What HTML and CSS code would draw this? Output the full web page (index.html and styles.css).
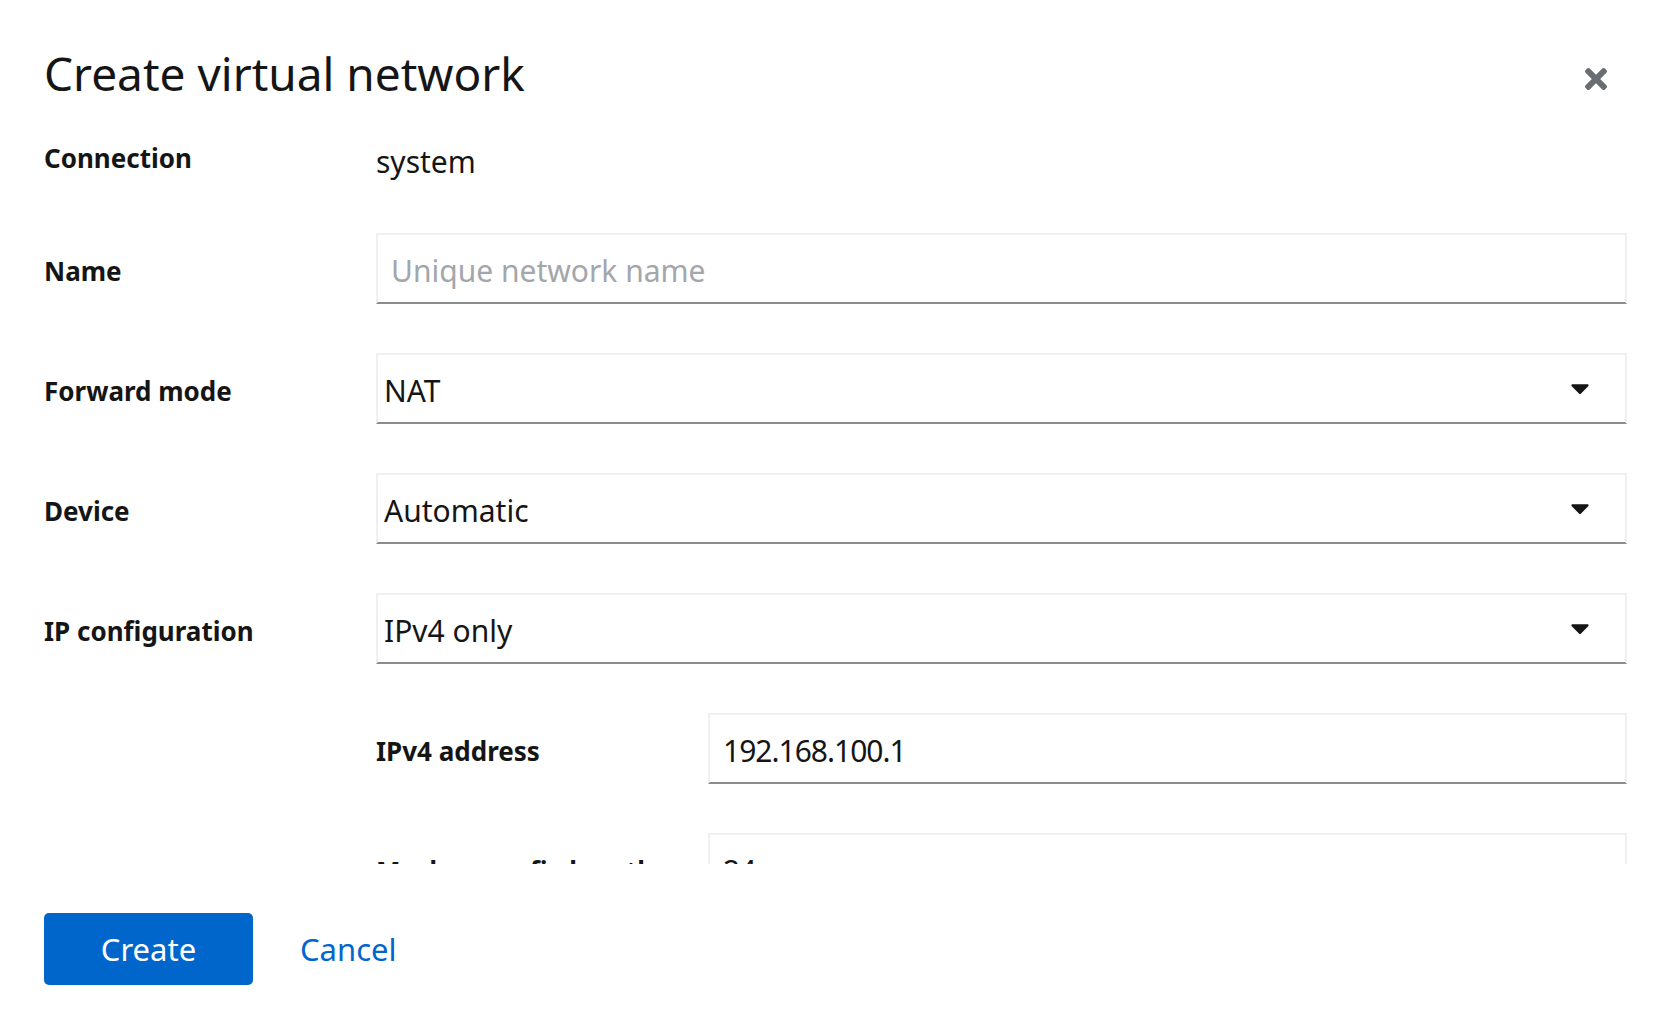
FILE: index.html
```html
<!DOCTYPE html>
<html lang="en">
<head>
<meta charset="utf-8">
<title>Create virtual network</title>
<link rel="stylesheet" href="styles.css">
</head>
<body>
<div class="modal" role="dialog" aria-labelledby="modal-title">
  <header class="modal-header">
    <h1 class="modal-title" id="modal-title">Create virtual network</h1>
    <button class="close-btn" aria-label="Close">
      <svg viewBox="0 80 352 352" width="22" height="22" aria-hidden="true"><path fill="currentColor" d="M242.72 256l100.07-100.07c12.28-12.28 12.28-32.19 0-44.48l-22.24-22.24c-12.28-12.28-32.19-12.28-44.48 0L176 189.28 75.93 89.21c-12.28-12.28-32.19-12.28-44.48 0L9.21 111.45c-12.28 12.28-12.28 32.19 0 44.48L109.28 256 9.21 356.07c-12.28 12.28-12.28 32.19 0 44.48l22.24 22.24c12.28 12.28 32.2 12.28 44.48 0L176 322.72l100.07 100.07c12.28 12.28 32.2 12.28 44.48 0l22.24-22.24c12.28-12.28 12.28-32.19 0-44.48L242.72 256z"/></svg>
    </button>
  </header>

  <div class="modal-body">
    <form class="form">
      <div class="form-row text-row">
        <label class="form-label">Connection</label>
        <div class="form-value">system</div>
      </div>

      <div class="form-row">
        <label class="form-label" for="name">Name</label>
        <div class="text-input"><span class="placeholder">Unique network name</span></div>
      </div>

      <div class="form-row">
        <label class="form-label">Forward mode</label>
        <div class="select"><span class="select-text">NAT</span><svg class="caret" viewBox="4 190 312 168" width="18" height="10" aria-hidden="true"><path fill="currentColor" d="M31.3 192h257.3c17.8 0 26.7 21.5 14.1 34.1L174.1 354.8c-7.8 7.8-20.5 7.8-28.3 0L17.2 226.1C4.6 213.5 13.5 192 31.3 192z"/></svg></div>
      </div>

      <div class="form-row">
        <label class="form-label">Device</label>
        <div class="select"><span class="select-text">Automatic</span><svg class="caret" viewBox="4 190 312 168" width="18" height="10" aria-hidden="true"><path fill="currentColor" d="M31.3 192h257.3c17.8 0 26.7 21.5 14.1 34.1L174.1 354.8c-7.8 7.8-20.5 7.8-28.3 0L17.2 226.1C4.6 213.5 13.5 192 31.3 192z"/></svg></div>
      </div>

      <div class="form-row">
        <label class="form-label">IP configuration</label>
        <div class="select"><span class="select-text">IPv4 only</span><svg class="caret" viewBox="4 190 312 168" width="18" height="10" aria-hidden="true"><path fill="currentColor" d="M31.3 192h257.3c17.8 0 26.7 21.5 14.1 34.1L174.1 354.8c-7.8 7.8-20.5 7.8-28.3 0L17.2 226.1C4.6 213.5 13.5 192 31.3 192z"/></svg></div>
      </div>

      <div class="form-row">
        <div class="spacer"></div>
        <div class="nested">
          <div class="form-row">
            <label class="form-label">IPv4 address</label>
            <div class="text-input"><span class="value">192.168.100.1</span></div>
          </div>
          <div class="form-row">
            <label class="form-label">Mask or prefix length</label>
            <div class="text-input"><span class="value">24</span></div>
          </div>
          <div class="form-row">
            <label class="form-label">DHCP range</label>
            <div class="text-input"><span class="value"></span></div>
          </div>
        </div>
      </div>
    </form>
  </div>

  <footer class="modal-footer">
    <button class="btn btn-primary">Create</button>
    <button class="btn btn-link">Cancel</button>
  </footer>
</div>
</body>
</html>
```

FILE: styles.css
```css
html, body {
  margin: 0;
  padding: 0;
  background: #ffffff;
}

body {
  font-family: "Noto Sans", "Open Sans", sans-serif;
  color: #151515;
}

.modal {
  width: 1662px;
  height: 1026px;
  box-sizing: border-box;
  padding: 43px 35px 0 44px;
  display: flex;
  flex-direction: column;
  background: #ffffff;
}

.modal-header {
  display: flex;
  align-items: flex-start;
  justify-content: space-between;
}

.modal-title {
  margin: 0;
  font-size: 46px;
  line-height: 60px;
  font-weight: 400;
  color: #151515;
}

.close-btn {
  border: 0;
  background: transparent;
  padding: 10px;
  margin: 15px 10px 0 0;
  color: #6a6e73;
  display: flex;
  align-items: center;
  justify-content: center;
}

.modal-body {
  height: 761px;
  box-sizing: border-box;
  padding-top: 37px;
  overflow: hidden;
}

.form {
  display: flex;
  flex-direction: column;
  gap: 49px;
}

.text-row {
  margin-bottom: 1px;
}

.form-row {
  display: grid;
  grid-template-columns: 300px 1fr;
  column-gap: 32px;
  align-items: start;
}

.form-label {
  font-size: 26px;
  line-height: 36px;
  font-weight: 700;
  padding-top: 20px;
  color: #151515;
  white-space: nowrap;
}

.text-row .form-label {
  padding-top: 0;
}

.form-value {
  font-size: 30px;
  line-height: 43px;
}

.nested {
  display: flex;
  flex-direction: column;
  gap: 49px;
}

.text-input,
.select {
  height: 71px;
  box-sizing: border-box;
  border: 2px solid #f0f0f0;
  border-bottom-color: #8a8d90;
  display: flex;
  align-items: center;
  font-size: 30px;
  line-height: 41px;
  padding-top: 3px;
}

.text-input {
  padding-left: 13px;
  padding-right: 13px;
}

.value {
  letter-spacing: -1px;
}

.placeholder {
  color: #a3a6aa;
}

.select {
  padding-left: 6px;
  padding-right: 36px;
  justify-content: space-between;
}

.caret {
  color: #151515;
  margin-top: -3px;
}

.modal-footer {
  display: flex;
  align-items: center;
  padding-top: 49px;
}

.btn {
  font-family: "Noto Sans", "Open Sans", sans-serif;
  font-size: 31px;
  line-height: 42px;
  border: 0;
  cursor: pointer;
}

.btn-primary {
  width: 209px;
  height: 72px;
  background: #0066cc;
  color: #ffffff;
  border-radius: 5px;
  padding: 0;
}

.btn-link {
  background: transparent;
  color: #0066cc;
  padding: 0;
  margin-left: 47px;
}
```
